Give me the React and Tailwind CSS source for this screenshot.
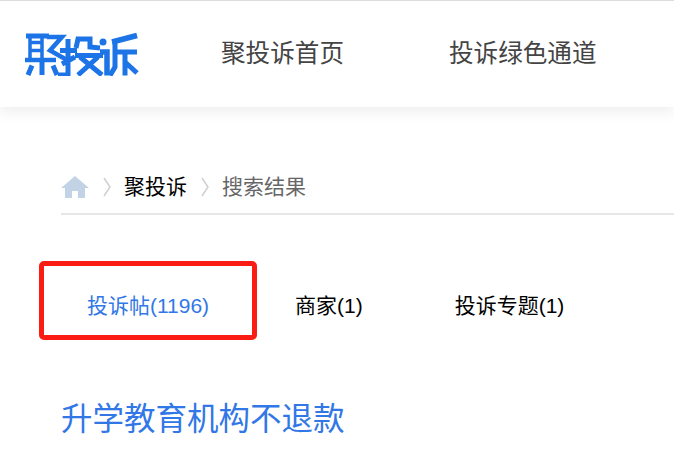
import React from 'react';

const Logo = () => (
  <svg width="114" height="44" viewBox="0 0 114 44" fill="none" stroke="#1c74e6" strokeWidth="4">
    {/* 聚 */}
    <path d="M1 4 H24" strokeWidth="5" />
    <path d="M5 4 V28 M17 4 V28 M5 10.5 H17 M5 18.5 H17" strokeWidth="3.5" />
    <path d="M0 28 H31" strokeWidth="4.5" />
    <path d="M22 5 H37 L25 18.5 L42 28" strokeWidth="4.5" />
    <path d="M7 33.5 L3 43 M17 30 V43 M28 33.5 L32 43" strokeWidth="5" />
    {/* 投 */}
    <path d="M43 7 V43 H33 M35 18.5 H52 M37 32 L50 25" strokeWidth="5" />
    <path d="M51 16 L53 7 H65 V15 L75 16" strokeWidth="5" />
    <path d="M50 23.5 H78 M55 25 L77 43 M73 25 L53 43" strokeWidth="5" />
    {/* 诉 */}
    <circle cx="78" cy="10" r="3.5" fill="#1c74e6" stroke="none" />
    <path d="M75 20 H82 V43.5" strokeWidth="5.5" />
    <path d="M87 10 L112 3.5" strokeWidth="5.5" />
    <path d="M90 10 V35 L85 43.5 M90 20 H112 M100 20 V43.5 M100 30 L112 41" strokeWidth="5" />
  </svg>
);

const HomeIcon = () => (
  <svg width="28" height="22" viewBox="0 0 28 22" fill="#c1d3e4">
    <path d="M14 0 L28 12 H24 V22 H17 V15 H11 V22 H4 V12 H0 Z" />
  </svg>
);

const Chevron = () => (
  <svg width="8" height="20" viewBox="0 0 8 20" fill="none" stroke="#cfcfcf" strokeWidth="1.5">
    <path d="M1 1 L7 10 L1 19" />
  </svg>
);

export default function App() {
  return (
    <div className="h-[449px] w-[674px] overflow-hidden bg-white font-['Liberation_Sans','Noto_Sans_CJK_SC',sans-serif]">
      <header className="flex h-[107px] items-center border-t border-[#dcdcdc] bg-white pl-[25px] shadow-[0_4px_14px_rgba(0,0,0,0.08)]">
        <Logo />
        <nav className="ml-[82px] flex gap-[105px] text-[24.6px] text-[#444]">
          <a>聚投诉首页</a>
          <a>投诉绿色通道</a>
        </nav>
      </header>

      <div className="pl-[61px] pt-[65px]">
        <div className="flex h-[43px] items-center border-b-2 border-[#e6e6e6] pb-[11px] text-[21px]">
          <HomeIcon />
          <span className="ml-[14px]"><Chevron /></span>
          <span className="ml-[13px] text-black">聚投诉</span>
          <span className="ml-[14px]"><Chevron /></span>
          <span className="ml-[13px] text-[#666]">搜索结果</span>
        </div>
      </div>

      <div className="mt-[46px] flex items-center pl-[39px] text-[21px]">
        <div className="flex h-[79px] w-[218px] items-center justify-center rounded-[5px] border-[5px] border-[#fb1d14] pt-[10px] text-[#3277e6]">
          投诉帖(1196)
        </div>
        <span className="ml-[38px] pt-[10px] text-black">商家(1)</span>
        <span className="ml-[92px] pt-[10px] text-black">投诉专题(1)</span>
      </div>

      <h2 className="mt-[56px] pl-[61px] text-[31.5px] font-normal text-[#3277e6]">升学教育机构不退款</h2>
    </div>
  );
}
